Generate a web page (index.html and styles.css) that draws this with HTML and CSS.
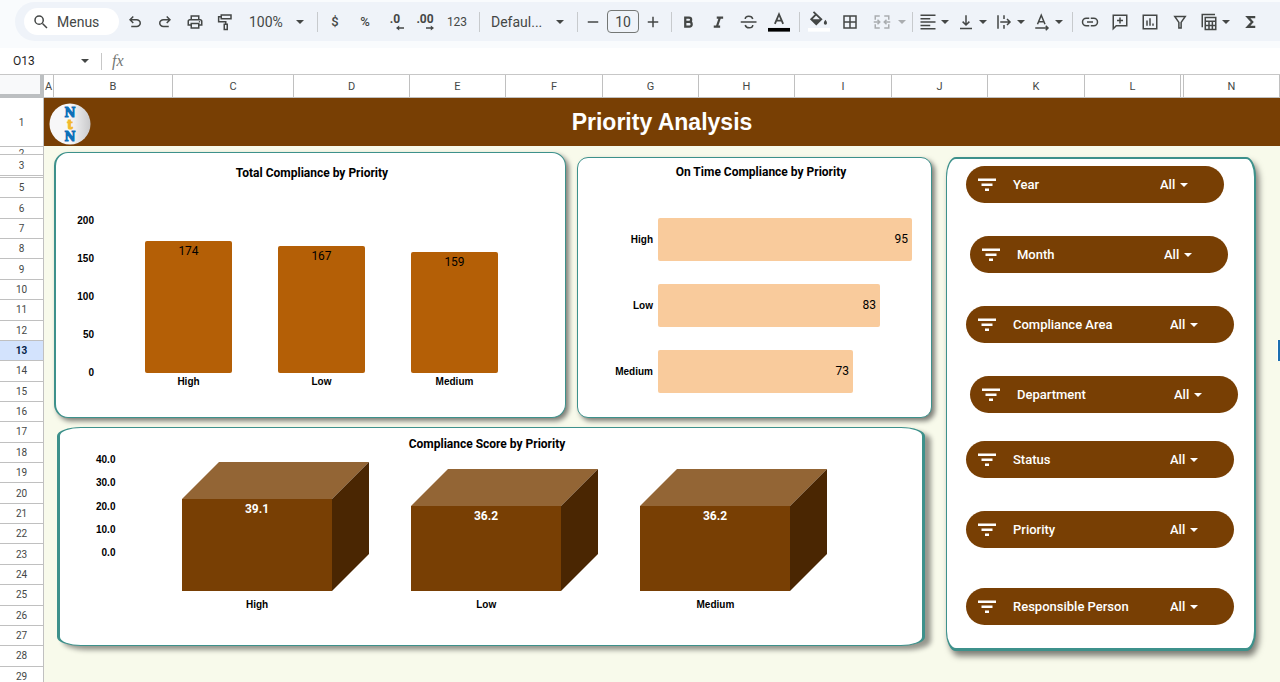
FILE: index.html
```html
<!DOCTYPE html>
<html lang="en">

<head>
  <meta charset="UTF-8">
  <meta name="viewport" content="width=device-width, initial-scale=1.0">
  <title>Priority Analysis</title>
  <link rel="stylesheet" href="styles.css">
</head>

<body>
  <header class="top">
    <div class="toolbar">
      <button class="menus">
        <svg viewBox="0 0 24 24"><g class="line"><circle cx="9.5" cy="9.5" r="5.5"/><path d="M14 14l6 6"/></g></svg>
        Menus
      </button>
      <button class="tool" aria-label="Undo"><svg viewBox="0 0 24 24"><path d="M7 19v-2h7.100q1.600 0 2.700-1T18 13.500 16.800 11 14.100 10H7.800l2.600 2.600L9 14 4 9l5-5 1.400 1.400L7.800 8h6.300q2.400 0 4.200 1.600T20 13.500t-1.700 3.900T14.100 19z"/></svg></button>
      <button class="tool" aria-label="Redo"><svg viewBox="0 0 24 24"><path transform="matrix(-1 0 0 1 24 0)" d="M7 19v-2h7.100q1.600 0 2.700-1T18 13.500 16.800 11 14.100 10H7.800l2.600 2.600L9 14 4 9l5-5 1.400 1.400L7.800 8h6.300q2.400 0 4.200 1.600T20 13.500t-1.700 3.900T14.100 19z"/></svg></button>
      <button class="tool" aria-label="Print"><svg viewBox="0 0 24 24"><path d="M19 8h-1V3H6v5H5c-1.660 0-3 1.340-3 3v6h4v4h12v-4h4v-6c0-1.660-1.340-3-3-3zM8 5h8v3H8V5zm8 12v2H8v-4h8v2zm2-2v-2H6v2H4v-4c0-.550.450-1 1-1h14c.550 0 1 .450 1 1v4h-2z"/><circle cx="18" cy="11.500" r="1"/></svg></button>
      <button class="tool" aria-label="Paint format"><svg viewBox="0 0 24 24"><g class="line"><path d="M7 2.500h13v5H7zM7 5H3.500v6.500H13v3M11 15h4v7h-4z"/></g></svg></button>
      <span class="select-box zoom">
        <select aria-label="Zoom"><option>100%</option></select>
      </span>
      <span class="sep"></span>
      <button class="tool text" aria-label="Format as currency">$</button>
      <button class="tool text" aria-label="Format as percent">%</button>
      <button class="tool decimal" aria-label="Decrease decimal places"><span>.0</span><svg viewBox="0 0 10 6"><path d="M10 2.200H4V0L0 3l4 3V3.800h6z"/></svg></button>
      <button class="tool decimal" aria-label="Increase decimal places"><span>.00</span><svg viewBox="0 0 10 6"><path d="M0 2.200h6V0l4 3-4 3V3.800H0z"/></svg></button>
      <button class="tool number" aria-label="More formats">123</button>
      <span class="sep"></span>
      <span class="select-box font">
        <select aria-label="Font"><option>Defaul...</option></select>
      </span>
      <span class="sep"></span>
      <button class="tool step" aria-label="Decrease font size"><svg viewBox="0 0 24 24"><path class="line" d="M5 12h14"/></svg></button>
      <input class="font-size" type="text" value="10" aria-label="Font size">
      <button class="tool step" aria-label="Increase font size"><svg viewBox="0 0 24 24"><path class="line" d="M5 12h14M12 5v14"/></svg></button>
      <span class="sep"></span>
      <button class="tool" aria-label="Bold"><svg viewBox="0 0 24 24"><path class="thick" d="M7 6h5a2.800 2.800 0 0 1 0 5.800H7zM7 11.800h5.500a3 3 0 0 1 0 6.200H7z"/></svg></button>
      <button class="tool" aria-label="Italic"><svg viewBox="0 0 24 24"><path class="thick" d="M9 6h8.500M5 18h8.500M13.300 6l-4.100 12"/></svg></button>
      <button class="tool" aria-label="Strikethrough"><svg viewBox="0 0 24 24"><path class="line" d="M1 12h21M17 8c-1-5-10-5-10 0M7 16c1 5 10 5 10 0"/></svg></button>
      <button class="tool" aria-label="Text color"><svg class="tall" viewBox="0 0 24 24"><path class="line" d="M7.500 14L12 3.500 16.500 14M9 10.500h6"/><path class="ink" d="M0 18.500h24v4H0z"/></svg></button>
      <span class="sep"></span>
      <button class="tool fill" aria-label="Fill color"><svg class="tall" viewBox="0 0 24 24"><path class="line" d="M6 1l8.500 8L9 14.500 3.500 9 9 3.500"/><path d="M3.500 9h11L9 14.500zM19 9.500q3.500 4.500 0 5.500-3.500-1 0-5.500z"/><path class="paper" d="M0 18.500h24v4H0z"/></svg></button>
      <button class="tool" aria-label="Borders"><svg viewBox="0 0 24 24"><path class="line" d="M4 4h16v16H4zM12 4v16M4 12h16"/></svg></button>
      <button class="tool split merge" aria-label="Merge cells"><svg viewBox="0 0 24 24"><path class="line" d="M9 4H3v5M15 4h6v5M9 20H3v-5M15 20h6v-5M1 12h8M6 9l3 3-3 3M23 12h-8M18 9l-3 3 3 3"/></svg><i class="arrow"></i></button>
      <span class="sep"></span>
      <button class="tool split" aria-label="Horizontal align"><svg viewBox="0 0 24 24"><path class="line" d="M2 3h20M2 7.500h13M2 12h20M2 16.500h13M2 21h20"/></svg><i class="arrow"></i></button>
      <button class="tool split" aria-label="Vertical align"><svg viewBox="0 0 24 24"><path class="line" d="M4 20.500h16M12 3v13M7.500 11.500L12 16l4.500-4.500"/></svg><i class="arrow"></i></button>
      <button class="tool split" aria-label="Text wrapping"><svg viewBox="0 0 24 24"><path class="line" d="M4 3v18M12 3v5M12 16v5M7 12h13M16 8l4 4-4 4"/></svg><i class="arrow"></i></button>
      <button class="tool split" aria-label="Text rotation"><svg viewBox="0 0 24 24"><path class="line" d="M6 15l5-12 5 12M7.500 11.500h7M3 20h17M17 17l3 3-3 3"/></svg><i class="arrow"></i></button>
      <span class="sep"></span>
      <button class="tool" aria-label="Insert link"><svg viewBox="0 0 24 24"><path class="line" d="M11 7H7a5 5 0 0 0 0 10h4M13 7h4a5 5 0 0 1 0 10h-4M8 12h8"/></svg></button>
      <button class="tool" aria-label="Insert comment"><svg viewBox="0 0 24 24"><path class="line" d="M3 3h18v14H7l-4 4zM12 6v8M8 10h8"/></svg></button>
      <button class="tool" aria-label="Insert chart"><svg viewBox="0 0 24 24"><path class="line" d="M3 3h18v18H3zM8 10v7M12 7v10M16 14v3"/></svg></button>
      <button class="tool" aria-label="Create a filter"><svg viewBox="0 0 24 24"><path class="line" d="M5 4.500h14l-5.500 8V20h-3v-7.500z"/></svg></button>
      <button class="tool split table" aria-label="Table views"><svg viewBox="0 0 24 24"><path class="line" d="M3 19V2h17M7 6h14v16H7zM7 11h14M7 16.500h14M12 11v11M16.500 11v11"/></svg><i class="arrow"></i></button>
      <button class="tool" aria-label="Functions"><svg viewBox="0 0 24 24"><path class="thick" d="M19 5.500H9l6 6.500-6 6.500h10"/></svg></button>
    </div>
  </header>

  <div class="formula-bar">
    <span class="name-box">
      <input type="text" value="O13" aria-label="Name box">
      <i class="arrow"></i>
    </span>
    <label class="fx" for="formula">fx</label>
    <input class="formula" id="formula" type="text">
  </div>

  <div class="columns">
    <div class="corner"></div>
    <div class="letters">
      <span>A</span><span>B</span><span>C</span><span>D</span><span>E</span><span>F</span><span>G</span><span>H</span><span>I</span><span>J</span><span>K</span><span>L</span><span></span><span>N</span>
    </div>
  </div>

  <div class="sheet">
    <div class="row-heads">
      <span class="row-title">1</span>
      <span class="row-thin">2</span>
      <span class="row-three">3</span>
      <span class="row-hidden"></span>
      <div class="rows">
        <span>5</span><span>6</span><span>7</span><span>8</span><span>9</span><span>10</span><span>11</span><span>12</span><span class="active">13</span><span>14</span><span>15</span><span>16</span><span>17</span><span>18</span><span>19</span><span>20</span><span>21</span><span>22</span><span>23</span><span>24</span><span>25</span><span>26</span><span>27</span><span>28</span><span>29</span>
      </div>
    </div>

    <main class="canvas">
      <div class="banner">
        <svg class="logo" viewBox="0 0 42 42">
          <defs>
            <linearGradient id="disc" x1="0" x2="1"><stop offset="0.500" stop-color="#f7f7f8"/><stop offset="1" stop-color="#c9c9cb"/></linearGradient>
          </defs>
          <circle cx="21" cy="21" r="20.500" fill="url(#disc)"/>
          <text class="logo-n" x="21" y="14">N</text>
          <text class="logo-t" x="21" y="26">t</text>
          <text class="logo-n" x="21" y="38">N</text>
        </svg>
        <h1>Priority Analysis</h1>
      </div>

      <div class="dashboard">
        <div class="charts">
          <div class="charts-row">
            <section class="card total">
              <h2>Total Compliance by Priority</h2>
              <div class="column-chart">
                <div class="axis"><span>200</span><span>150</span><span>100</span><span>50</span><span>0</span></div>
                <div class="bars">
                  <div class="bar" style="height: 87%">174</div>
                  <div class="bar" style="height: 83.5%">167</div>
                  <div class="bar" style="height: 79.5%">159</div>
                </div>
                <div class="names"><span>High</span><span>Low</span><span>Medium</span></div>
              </div>
            </section>

            <section class="card on-time">
              <h2>On Time Compliance by Priority</h2>
              <div class="bar-chart">
                <span>High</span>
                <div><div class="bar" style="width: 100%">95</div></div>
                <span>Low</span>
                <div><div class="bar" style="width: 87.4%">83</div></div>
                <span>Medium</span>
                <div><div class="bar" style="width: 76.8%">73</div></div>
              </div>
            </section>
          </div>

          <section class="card score">
            <h2>Compliance Score by Priority</h2>
            <div class="cube-chart">
              <div class="axis"><span>40.0</span><span>30.0</span><span>20.0</span><span>10.0</span><span>0.0</span></div>
              <div class="cubes">
                <figure>
                  <svg viewBox="0 0 187 130">
                    <path class="face-top" d="M0 38L37 1h150l-37 37z"/>
                    <path class="face-side" d="M150 38l37-37v92l-37 37z"/>
                    <path class="face-front" d="M0 38h150v92H0z"/>
                    <text x="75" y="52">39.1</text>
                  </svg>
                  <figcaption>High</figcaption>
                </figure>
                <figure>
                  <svg viewBox="0 0 187 130">
                    <path class="face-top" d="M0 45L37 8h150l-37 37z"/>
                    <path class="face-side" d="M150 45l37-37v85l-37 37z"/>
                    <path class="face-front" d="M0 45h150v85H0z"/>
                    <text x="75" y="59">36.2</text>
                  </svg>
                  <figcaption>Low</figcaption>
                </figure>
                <figure>
                  <svg viewBox="0 0 187 130">
                    <path class="face-top" d="M0 45L37 8h150l-37 37z"/>
                    <path class="face-side" d="M150 45l37-37v85l-37 37z"/>
                    <path class="face-front" d="M0 45h150v85H0z"/>
                    <text x="75" y="59">36.2</text>
                  </svg>
                  <figcaption>Medium</figcaption>
                </figure>
              </div>
            </div>
          </section>
        </div>

        <aside class="card filters">
          <div class="slicer narrow">
            <svg viewBox="0 0 18 12"><path d="M0 0h18v2.500H0zM3.500 5h11v2.500h-11zM7 10h4v2.500H7z"/></svg>
            <label for="year">Year</label>
            <span class="select-box"><select id="year"><option>All</option></select></span>
          </div>
          <div class="slicer narrow indent">
            <svg viewBox="0 0 18 12"><path d="M0 0h18v2.500H0zM3.500 5h11v2.500h-11zM7 10h4v2.500H7z"/></svg>
            <label for="month">Month</label>
            <span class="select-box"><select id="month"><option>All</option></select></span>
          </div>
          <div class="slicer">
            <svg viewBox="0 0 18 12"><path d="M0 0h18v2.500H0zM3.500 5h11v2.500h-11zM7 10h4v2.500H7z"/></svg>
            <label for="area">Compliance Area</label>
            <span class="select-box"><select id="area"><option>All</option></select></span>
          </div>
          <div class="slicer indent">
            <svg viewBox="0 0 18 12"><path d="M0 0h18v2.500H0zM3.500 5h11v2.500h-11zM7 10h4v2.500H7z"/></svg>
            <label for="department">Department</label>
            <span class="select-box"><select id="department"><option>All</option></select></span>
          </div>
          <div class="slicer near">
            <svg viewBox="0 0 18 12"><path d="M0 0h18v2.500H0zM3.500 5h11v2.500h-11zM7 10h4v2.500H7z"/></svg>
            <label for="status">Status</label>
            <span class="select-box"><select id="status"><option>All</option></select></span>
          </div>
          <div class="slicer">
            <svg viewBox="0 0 18 12"><path d="M0 0h18v2.500H0zM3.500 5h11v2.500h-11zM7 10h4v2.500H7z"/></svg>
            <label for="priority">Priority</label>
            <span class="select-box"><select id="priority"><option>All</option></select></span>
          </div>
          <div class="slicer far">
            <svg viewBox="0 0 18 12"><path d="M0 0h18v2.500H0zM3.500 5h11v2.500h-11zM7 10h4v2.500H7z"/></svg>
            <label for="person">Responsible Person</label>
            <span class="select-box"><select id="person"><option>All</option></select></span>
          </div>
        </aside>
      </div>

      <div class="selected-cell"></div>
    </main>
  </div>
</body>

</html>
```
FILE: styles.css
```css
* {
  box-sizing: border-box;
}

body {
  margin: 0;
  height: 100vh;
  display: flex;
  flex-direction: column;
  overflow: hidden;
  background: #fff;
  color: #444746;
  font-family: Roboto, "Liberation Sans", Arial, sans-serif;
}

button,
input,
select {
  margin: 0;
  padding: 0;
  border: none;
  background: none;
  color: inherit;
  font: inherit;
}

button,
select {
  cursor: pointer;
}

select {
  appearance: none;
  outline: none;
}

/* Toolbar */
.top {
  background: #f9fbfd;
  padding: 2px 0 7px 15px;
}

.toolbar {
  display: flex;
  align-items: center;
  height: 39px;
  padding-left: 9px;
  background: #eff3f9;
  border-radius: 20px 0 0 20px;
  font-size: 14px;
}

.toolbar > * {
  flex-shrink: 0;
}

.toolbar svg {
  width: 18px;
  height: 18px;
  fill: #444746;
}

.toolbar .line,
.toolbar .thick {
  fill: none;
  stroke: #444746;
  stroke-width: 2;
}

.toolbar .thick {
  stroke-width: 3;
}

.toolbar svg.tall {
  width: 22px;
  height: 22px;
}

.toolbar .ink {
  fill: #000;
}

.toolbar .paper {
  fill: #fff;
}

.menus {
  display: flex;
  align-items: center;
  gap: 7px;
  width: 95px;
  height: 27px;
  margin-right: 1px;
  padding-left: 8px;
  border-radius: 14px;
  background: #fff;
}

.tool {
  display: flex;
  align-items: center;
  justify-content: center;
  width: 30px;
  height: 28px;
}

.tool.text {
  font-size: 13px;
  font-weight: 500;
}

.tool.decimal {
  flex-direction: column;
  font-size: 12px;
  font-weight: 700;
  line-height: 12px;
}

.tool.decimal svg {
  width: 8px;
  height: 6px;
  align-self: flex-end;
  margin-right: 6px;
}

.tool.number {
  width: 34px;
  font-size: 12px;
}

.tool.step {
  width: 26px;
}

.tool.fill {
  width: 33px;
}

.tool.split {
  width: 38px;
  gap: 4px;
}

.tool.merge {
  width: 42px;
  gap: 7px;
  padding-left: 6px;
  opacity: 0.4;
}

.tool.table {
  width: 40px;
}

.arrow,
.select-box::after {
  content: "";
  border: 4px solid transparent;
  border-top-color: #444746;
  border-bottom: none;
}

.sep {
  width: 1px;
  height: 20px;
  margin: 0 2px 0 5px;
  background: #c7cacd;
}

.select-box {
  position: relative;
}

.select-box select {
  width: 100%;
}

.select-box::after {
  position: absolute;
  top: 50%;
  right: 8px;
  margin-top: -2px;
  pointer-events: none;
}

.zoom {
  width: 72px;
  padding-left: 9px;
}

.font {
  width: 90px;
  padding-left: 9px;
}

.font-size {
  width: 32px;
  height: 23px;
  margin: 0 1px;
  border: 1px solid #747775;
  border-radius: 4px;
  text-align: center;
}

/* Formula bar */
.formula-bar {
  display: flex;
  align-items: center;
  height: 27px;
  border-bottom: 1px solid #c7c7c7;
}

.name-box {
  display: flex;
  align-items: center;
  width: 102px;
  height: 17px;
  padding: 0 12px 0 13px;
  border-right: 1px solid #c7c7c7;
  color: #1f1f1f;
  font-size: 12px;
}

.name-box input {
  flex: 1;
  min-width: 0;
}

.fx {
  padding: 0 10px;
  color: #747775;
  font: italic 16px "Liberation Serif", serif;
}

.formula {
  flex: 1;
}

/* Grid headings */
.columns {
  display: flex;
  height: 23px;
  font-size: 11px;
}

.corner {
  width: 44px;
  border: solid #bcbfc1;
  border-width: 0 4px 4px 0;
  background: #f8f9fa;
}

.letters {
  flex: 1;
  display: grid;
  grid-template-columns: 10fr 119fr 121fr 116fr 96fr 97fr 96fr 96fr 97fr 96fr 97fr 96fr 3fr 96fr;
  border-bottom: 1px solid #c0c0c0;
}

.letters span {
  border-right: 1px solid #c0c0c0;
  line-height: 23px;
  text-align: center;
}

.sheet {
  flex: 1;
  min-height: 0;
  display: flex;
  overflow: hidden;
}

.row-heads {
  width: 44px;
  flex-shrink: 0;
  border-right: 1px solid #c0c0c0;
  font-size: 10px;
}

.row-heads span {
  display: flex;
  align-items: center;
  justify-content: center;
  border-bottom: 1px solid #c0c0c0;
}

.row-title {
  height: 49px;
}

/* row 2 is squeezed, only the top of its number shows */
.row-heads .row-thin {
  height: 8px;
  padding-top: 1px;
  overflow: hidden;
  align-items: flex-start;
}

.row-three {
  height: 21px;
}

.row-hidden {
  height: 2px;
}

.rows {
  display: grid;
  grid-auto-rows: 1fr;
  height: 509px;
}

.rows .active {
  background: #d3e3fd;
  color: #041e49;
  font-weight: 700;
}

/* Dashboard */
.canvas {
  position: relative;
  flex: 1;
  background: #f8faeb;
}

.banner {
  display: flex;
  align-items: center;
  height: 48px;
  padding: 0 5px;
  background: #783f04;
}

.logo {
  width: 42px;
  height: 42px;
  margin-top: 4px;
}

.logo text {
  font-family: "DejaVu Serif", serif;
  font-weight: 700;
  font-size: 12px;
  text-anchor: middle;
}

.logo-n {
  fill: #0d6fb8;
  stroke: #0d6fb8;
}

.logo-t {
  fill: #f2b92c;
  stroke: #f2b92c;
}

.banner h1 {
  flex: 1;
  margin: 0;
  padding-right: 42px;
  color: #fff;
  font: 700 23px "Liberation Sans", Arial, sans-serif;
  text-align: center;
}

.dashboard {
  display: flex;
  align-items: flex-start;
  gap: 14px;
  padding: 6px 24px 0 10px;
}

.charts {
  flex: 1;
}

.charts-row {
  display: grid;
  grid-template-columns: 512fr 355fr;
  column-gap: 11px;
}

.card {
  border: 1px solid #3d918b;
  background: #fff;
  color: #000;
}

.card h2 {
  margin: 0;
  font-size: 12px;
  font-weight: 700;
  line-height: 16px;
  text-align: center;
}

.card .axis,
.names,
.bar-chart span,
figcaption {
  font: 700 10px/12px "Liberation Sans", Arial, sans-serif;
}

.axis {
  display: flex;
  flex-direction: column;
  justify-content: space-between;
  text-align: right;
}

.bar {
  border-radius: 2px;
  font-size: 12px;
}

.total {
  padding: 12px 44px 29px 19px;
  border-left-width: 2px;
  border-radius: 14px;
  box-shadow: 3px 3px 5px rgba(0, 0, 0, 0.5);
}

.total h2 {
  margin-right: -28px;
}

.column-chart {
  display: grid;
  grid-template-columns: 19px 1fr;
  column-gap: 28px;
  margin-top: 40px;
}

/* labels stick out half a line above and below the plot */
.column-chart .axis {
  margin: -6px 0;
}

.bars {
  display: grid;
  grid-template-columns: repeat(3, 1fr);
  align-items: end;
  justify-items: center;
  height: 152px;
}

.bars .bar {
  width: 65%;
  padding-top: 3px;
  background: #b45f06;
  text-align: center;
}

.names {
  grid-column: 2;
  display: grid;
  grid-template-columns: repeat(3, 1fr);
  padding-top: 3px;
  text-align: center;
}

.on-time {
  margin-top: 5px;
  padding: 6px 19px 23px 10px;
  border-radius: 11px;
  box-shadow: 3px 3px 5px rgba(0, 0, 0, 0.5);
}

.on-time h2 {
  margin-left: 22px;
}

.bar-chart {
  display: grid;
  grid-template-columns: 65px 1fr;
  gap: 23px 5px;
  align-items: center;
  margin-top: 38px;
}

.bar-chart span {
  text-align: right;
}

.bar-chart .bar {
  padding-right: 4px;
  background: #f9cb9c;
  line-height: 43px;
  text-align: right;
}

.score {
  margin: 9px 7px 0 3px;
  padding: 8px 92px 34px 36px;
  border-left-width: 3px;
  border-right-width: 3px;
  border-radius: 24px / 9px;
  box-shadow: 6px 4px 5px rgba(0, 0, 0, 0.4);
}

.score h2 {
  margin-right: -48px;
}

.cube-chart {
  display: flex;
  align-items: flex-start;
  gap: 27px;
  margin-top: 2px;
}

.cube-chart .axis {
  height: 105px;
}

.cubes {
  flex: 1;
  display: grid;
  grid-template-columns: repeat(3, 1fr);
  padding-top: 7px;
}

.cubes figure {
  display: flex;
  flex-direction: column;
  align-items: center;
  margin: 0;
}

/* the front face, not the depth, is centred over the name */
.cubes svg {
  width: 187px;
  margin-right: -37px;
}

.cubes text {
  fill: #fff;
  font-size: 12px;
  font-weight: 700;
  text-anchor: middle;
}

.face-top {
  fill: #936535;
}

.face-side {
  fill: #4a2602;
}

.face-front {
  fill: #783f04;
}

figcaption {
  padding-top: 8px;
}

/* Slicers */
.filters {
  display: flex;
  flex-direction: column;
  gap: 33px;
  width: 310px;
  margin-top: 5px;
  padding: 7px 20px 23px 19px;
  border-width: 2px 2px 3px 1px;
  border-radius: 10px / 20px;
  box-shadow: 3px 5px 6px rgba(0, 0, 0, 0.5);
}

.slicer {
  display: flex;
  align-items: center;
  height: 37px;
  padding: 0 28px 0 12px;
  border-radius: 19px;
  background: #783f04;
  color: #fff;
  font-size: 13px;
  font-weight: 500;
}

.slicer.narrow {
  margin-right: 10px;
}

.slicer.indent {
  margin-left: 4px;
  margin-right: -4px;
}

.slicer.narrow.indent {
  margin-right: 6px;
}

.slicer.near {
  margin-top: -5px;
}

.slicer.far {
  margin-top: 7px;
}

.slicer > svg {
  width: 18px;
  height: 13px;
  margin-right: 17px;
  fill: #fff;
}

.slicer label {
  flex: 1;
}

.slicer .select-box {
  width: 36px;
}

.slicer .select-box::after {
  right: 8px;
  border-top-color: #fff;
}

.selected-cell {
  position: absolute;
  top: 242px;
  right: 0;
  width: 3px;
  height: 21px;
  border-left: 1px solid #fff;
  background: #1c6fb0;
}
```
